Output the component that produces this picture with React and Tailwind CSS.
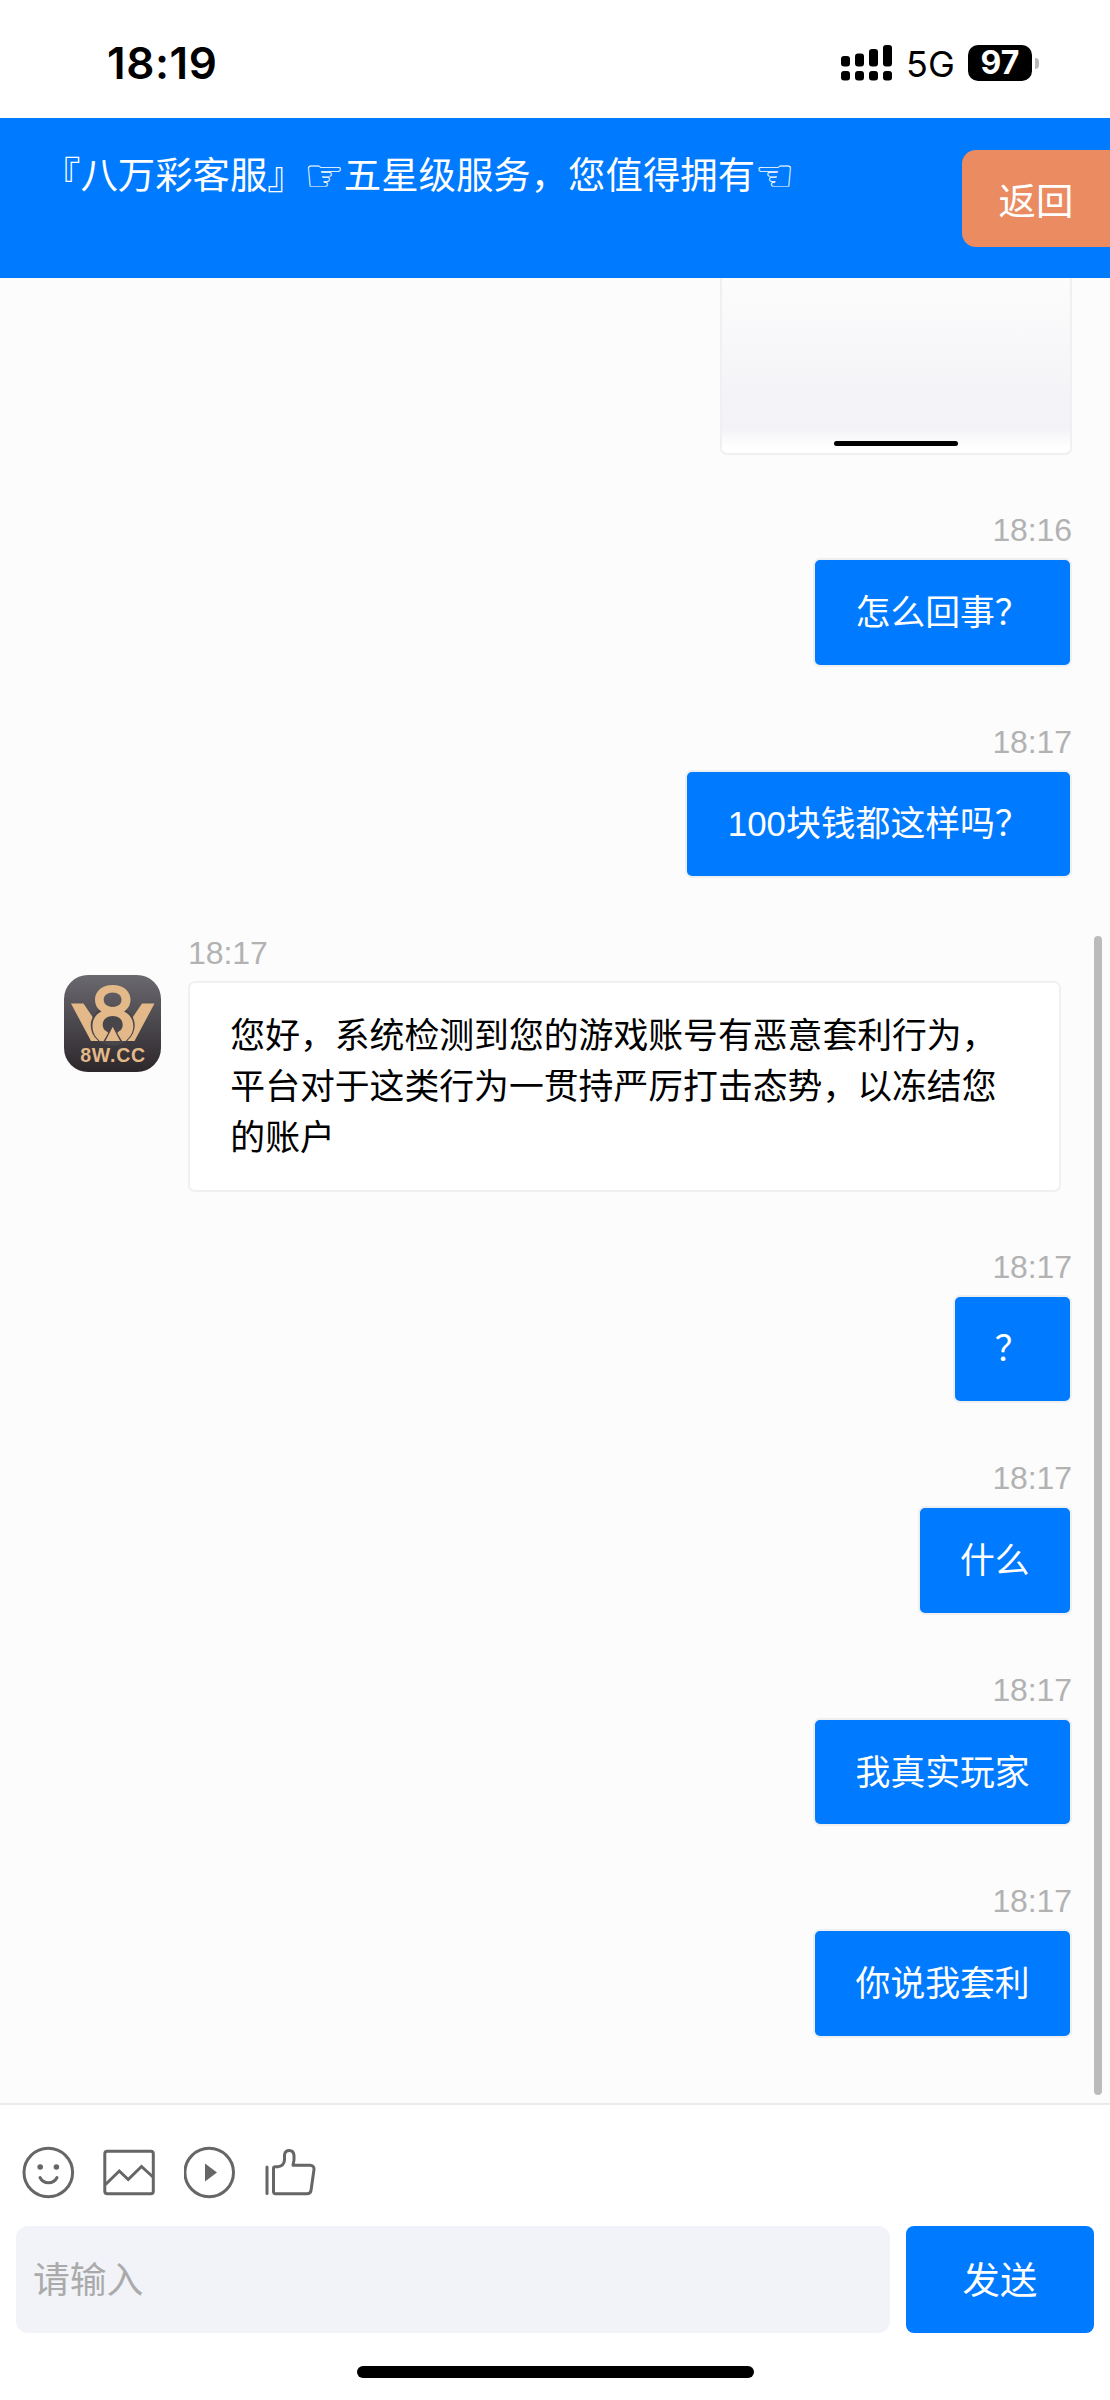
const MESSAGES = [
  { id: 1, time: "18:16", text: "怎么回事？", mine: true },
  { id: 2, time: "18:17", text: "100块钱都这样吗？", mine: true },
  {
    id: 3,
    time: "18:17",
    text: "您好，系统检测到您的游戏账号有恶意套利行为，平台对于这类行为一贯持严厉打击态势，以冻结您的账户",
    mine: false,
  },
  { id: 4, time: "18:17", text: "？", mine: true },
  { id: 5, time: "18:17", text: "什么", mine: true },
  { id: 6, time: "18:17", text: "我真实玩家", mine: true },
  { id: 7, time: "18:17", text: "你说我套利", mine: true },
];

function StatusBar() {
  return (
    <div className="flex h-[118px] shrink-0 items-center justify-between bg-white pt-[8px] pr-[71px] pl-[107px] font-['Inter',sans-serif] text-black">
      <span className="text-[44px] leading-none font-semibold tracking-[0.6px]">18:19</span>
      <div className="flex items-center">
        <svg width="51" height="36" viewBox="0 0 51 36">
          <rect x="0" y="11" width="9" height="10.5" rx="3" />
          <rect x="14" y="8.5" width="9" height="13" rx="3" />
          <rect x="28" y="4" width="9" height="17.5" rx="3" />
          <rect x="42" y="0" width="9" height="21.5" rx="3" />
          <rect x="0" y="26" width="9" height="9.5" rx="3" />
          <rect x="14" y="26" width="9" height="9.5" rx="3" />
          <rect x="28" y="26" width="9" height="9.5" rx="3" />
          <rect x="42" y="26" width="9" height="9.5" rx="3" />
        </svg>
        <span className="ml-[14px] w-[62px] pt-[2px] text-[36px] leading-none">5G</span>
        <span className="flex h-[36px] w-[64px] items-center justify-center rounded-[10px] bg-black text-[32px] leading-none font-bold text-white">
          97
        </span>
        <span className="ml-[3px] h-[11px] w-[4px] rounded-r-full bg-[#b8b8b8]" />
      </div>
    </div>
  );
}

function Header() {
  return (
    <header className="flex h-[160px] shrink-0 items-start justify-between bg-[#007aff] text-[37.4px] text-white">
      <h1 className="flex pt-[33px] pl-[43px] leading-[50px] whitespace-nowrap">
        <span>『八万彩客服』</span>
        <span className="flex w-[39px] justify-center font-['DejaVu_Sans',sans-serif] text-[45px]">☞</span>
        <span>五星级服务，您值得拥有</span>
        <span className="flex w-[39px] justify-center font-['DejaVu_Sans',sans-serif] text-[45px]">☜</span>
      </h1>
      <button className="mt-[32px] h-[97px] w-[148px] rounded-l-[14px] bg-[#ea8b61] pt-[7px] leading-[90px]">
        返回
      </button>
    </header>
  );
}

function Avatar() {
  return (
    <svg className="mt-[47px] mr-[27px] shrink-0" width="97" height="97" viewBox="0 0 97 97">
      <defs>
        <linearGradient id="avatar" x1="0" y1="0" x2="0" y2="1">
          <stop offset="0" stopColor="#6a696f" />
          <stop offset="1" stopColor="#2c272b" />
        </linearGradient>
      </defs>
      <rect width="97" height="97" rx="24" fill="url(#avatar)" />
      <g fill="#e3b989">
        <path d="M7 28.5H19.5L34 50V66H27Z" />
        <path d="M90.5 28.5H78L63.5 50V66H70.5Z" />
      </g>
      <ellipse cx="48.7" cy="50.5" rx="22" ry="20" fill="#49464b" />
      <path
        fill="#e3b989"
        fillRule="evenodd"
        d="M48.7 10C59 10 66.5 16 66.5 24.5C66.5 30 64 34 60 36.5C66 39.5 69.3 44.5 69.3 51C69.3 57 66.5 62 62 65.5L57 65.5L48.7 51L40.4 65.5H35.5C31 62 28.5 57 28.5 51C28.5 44.5 31.5 39.5 37.5 36.5C33.5 34 31 30 31 24.5C31 16 38.5 10 48.7 10ZM48.7 17.5C43.5 17.5 39.7 20.5 39.7 24.7C39.7 29 43.5 31.8 48.7 31.8C53.9 31.8 57.5 29 57.5 24.7C57.5 20.5 53.9 17.5 48.7 17.5Z"
      />
      <path fill="#49464b" d="M48.7 41C55 41 58.7 44.7 58.7 50C58.7 52.500 57.500 54.500 55.500 56.500L60 66.500H37.500L42 56.500C40 54.500 38.700 52.500 38.700 50C38.700 44.700 42.500 41 48.700 41Z" />
      <path fill="#e3b989" d="M34.500 64.800L41.500 55.500L44.500 58L39.500 66H36Z M63 64.800L56 55.500L53 58L58 66H61.500Z" />
      <path fill="#e3b989" stroke="#49464b" strokeWidth="1.200" d="M48.700 50.500L57 66.500H40.500Z" />
      <text
        x="48.7"
        y="87"
        textAnchor="middle"
        fill="#e3b989"
        fontSize="19.5"
        fontWeight="700"
        fontFamily="Liberation Sans, sans-serif"
        textLength="65"
      >
        8W.CC
      </text>
    </svg>
  );
}

function Message({ time, text, mine }) {
  return (
    <div className={mine ? "mb-[50px] flex justify-end pr-[38px]" : "mb-[50px] flex pr-[49px] pl-[64px]"}>
      {!mine && <Avatar />}
      <div className={mine ? "flex flex-col items-end" : "flex flex-col items-start"}>
        <time className="mb-[3px] h-[50px] text-[32px] leading-[51px] tracking-[-0.1px] text-[#b2b2b2]">{time}</time>
        <p
          className={
            mine
              ? "rounded-[7px] border-2 border-[#eeeff1] bg-[#007aff] px-[40.3px] py-[26.8px] text-[34.85px] leading-[51px] text-white"
              : "rounded-[7px] border-2 border-[#f0f0f0] bg-white px-[40.3px] py-[26.7px] text-[34.85px] leading-[51px] text-black"
          }
        >
          {text}
        </p>
      </div>
    </div>
  );
}

function Toolbar() {
  return (
    <div className="flex gap-[28px] pl-[22px] text-[#666]">
      <svg width="53" height="53" viewBox="0 0 53 53" fill="none" stroke="currentColor" strokeWidth="3" strokeLinecap="round">
        <circle cx="26.3" cy="26.5" r="24.3" />
        <circle cx="18.2" cy="21" r="2.8" fill="currentColor" stroke="none" />
        <circle cx="34.4" cy="21" r="2.8" fill="currentColor" stroke="none" />
        <path d="M18 31.5C21.5 38.5 31.5 38.5 35 31.5" />
      </svg>
      <svg width="53" height="53" viewBox="0 0 53 53" fill="none" stroke="currentColor" strokeWidth="3">
        <rect x="1.8" y="5.3" width="48.5" height="42.5" rx="2.5" />
        <path d="M2.5 38.5L16.3 25L25.2 33.5L38.5 20.5L50 31" />
      </svg>
      <svg width="53" height="53" viewBox="0 0 53 53" fill="none" stroke="currentColor" strokeWidth="3">
        <circle cx="25.2" cy="26.5" r="24.3" />
        <path d="M21 17.5V35.5L33 26.5Z" fill="currentColor" stroke="none" />
      </svg>
      <svg width="53" height="53" viewBox="0 0 53 53" fill="none" stroke="currentColor" strokeWidth="3" strokeLinejoin="round" strokeLinecap="round">
        <path d="M2 21V47.5" />
        <path d="M8.5 22.5Q8.5 20.8 10.5 20.8H13Q19 20 19.5 14V9Q20 4.5 24.5 4.5Q28.5 4.5 29 9.500Q29.500 14 28 19.200H45Q49.300 19.500 49 23.500L46 44.500Q45.500 47.700 42 47.700H10.500Q8.500 47.700 8.500 45.500Z" />
      </svg>
    </div>
  );
}

export default function App() {
  return (
    <div className="flex h-[2400px] w-[1110px] flex-col overflow-hidden bg-white font-['Liberation_Sans','Noto_Sans_CJK_SC',sans-serif]">
      <StatusBar />
      <Header />

      {/* Conversation */}
      <main className="relative h-[1825px] shrink-0 overflow-hidden bg-[#fcfcfc]">
        <div className="mb-[50px] flex justify-end pr-[38px]">
          <div className="flex h-[177px] w-[352px] flex-col items-center justify-end rounded-b-[7px] border-2 border-t-0 border-[#f0f0f0] bg-linear-to-b from-[#fcfcfc] from-0% via-[#f2f2f7] via-85% to-white to-97% pb-[7px]">
            <div className="h-[5px] w-[124px] rounded-full bg-black" />
          </div>
        </div>
        {MESSAGES.map((msg) => (
          <Message key={msg.id} time={msg.time} text={msg.text} mine={msg.mine} />
        ))}
        <div className="absolute top-[658px] right-[8px] h-[1159px] w-[8px] rounded-full bg-[#bbb]" />
      </main>

      {/* Composer */}
      <footer className="flex h-[297px] shrink-0 flex-col border-t-2 border-[#ebebeb] bg-white pt-[41px]">
        <Toolbar />
        <div className="mt-[27px] flex gap-[16px] px-[16px] text-[37.4px]">
          <input
            className="h-[107px] w-[874px] rounded-[12px] bg-[#f2f3f8] px-[17px] pt-[3px] text-[36.8px] placeholder:text-[#aaa]"
            placeholder="请输入"
          />
          <button className="h-[107px] w-[188px] rounded-[8px] bg-[#007aff] pt-[3px] text-white">发送</button>
        </div>
        <div className="mt-[33px] h-[12px] w-[397px] self-center rounded-full bg-black" />
      </footer>
    </div>
  );
}
